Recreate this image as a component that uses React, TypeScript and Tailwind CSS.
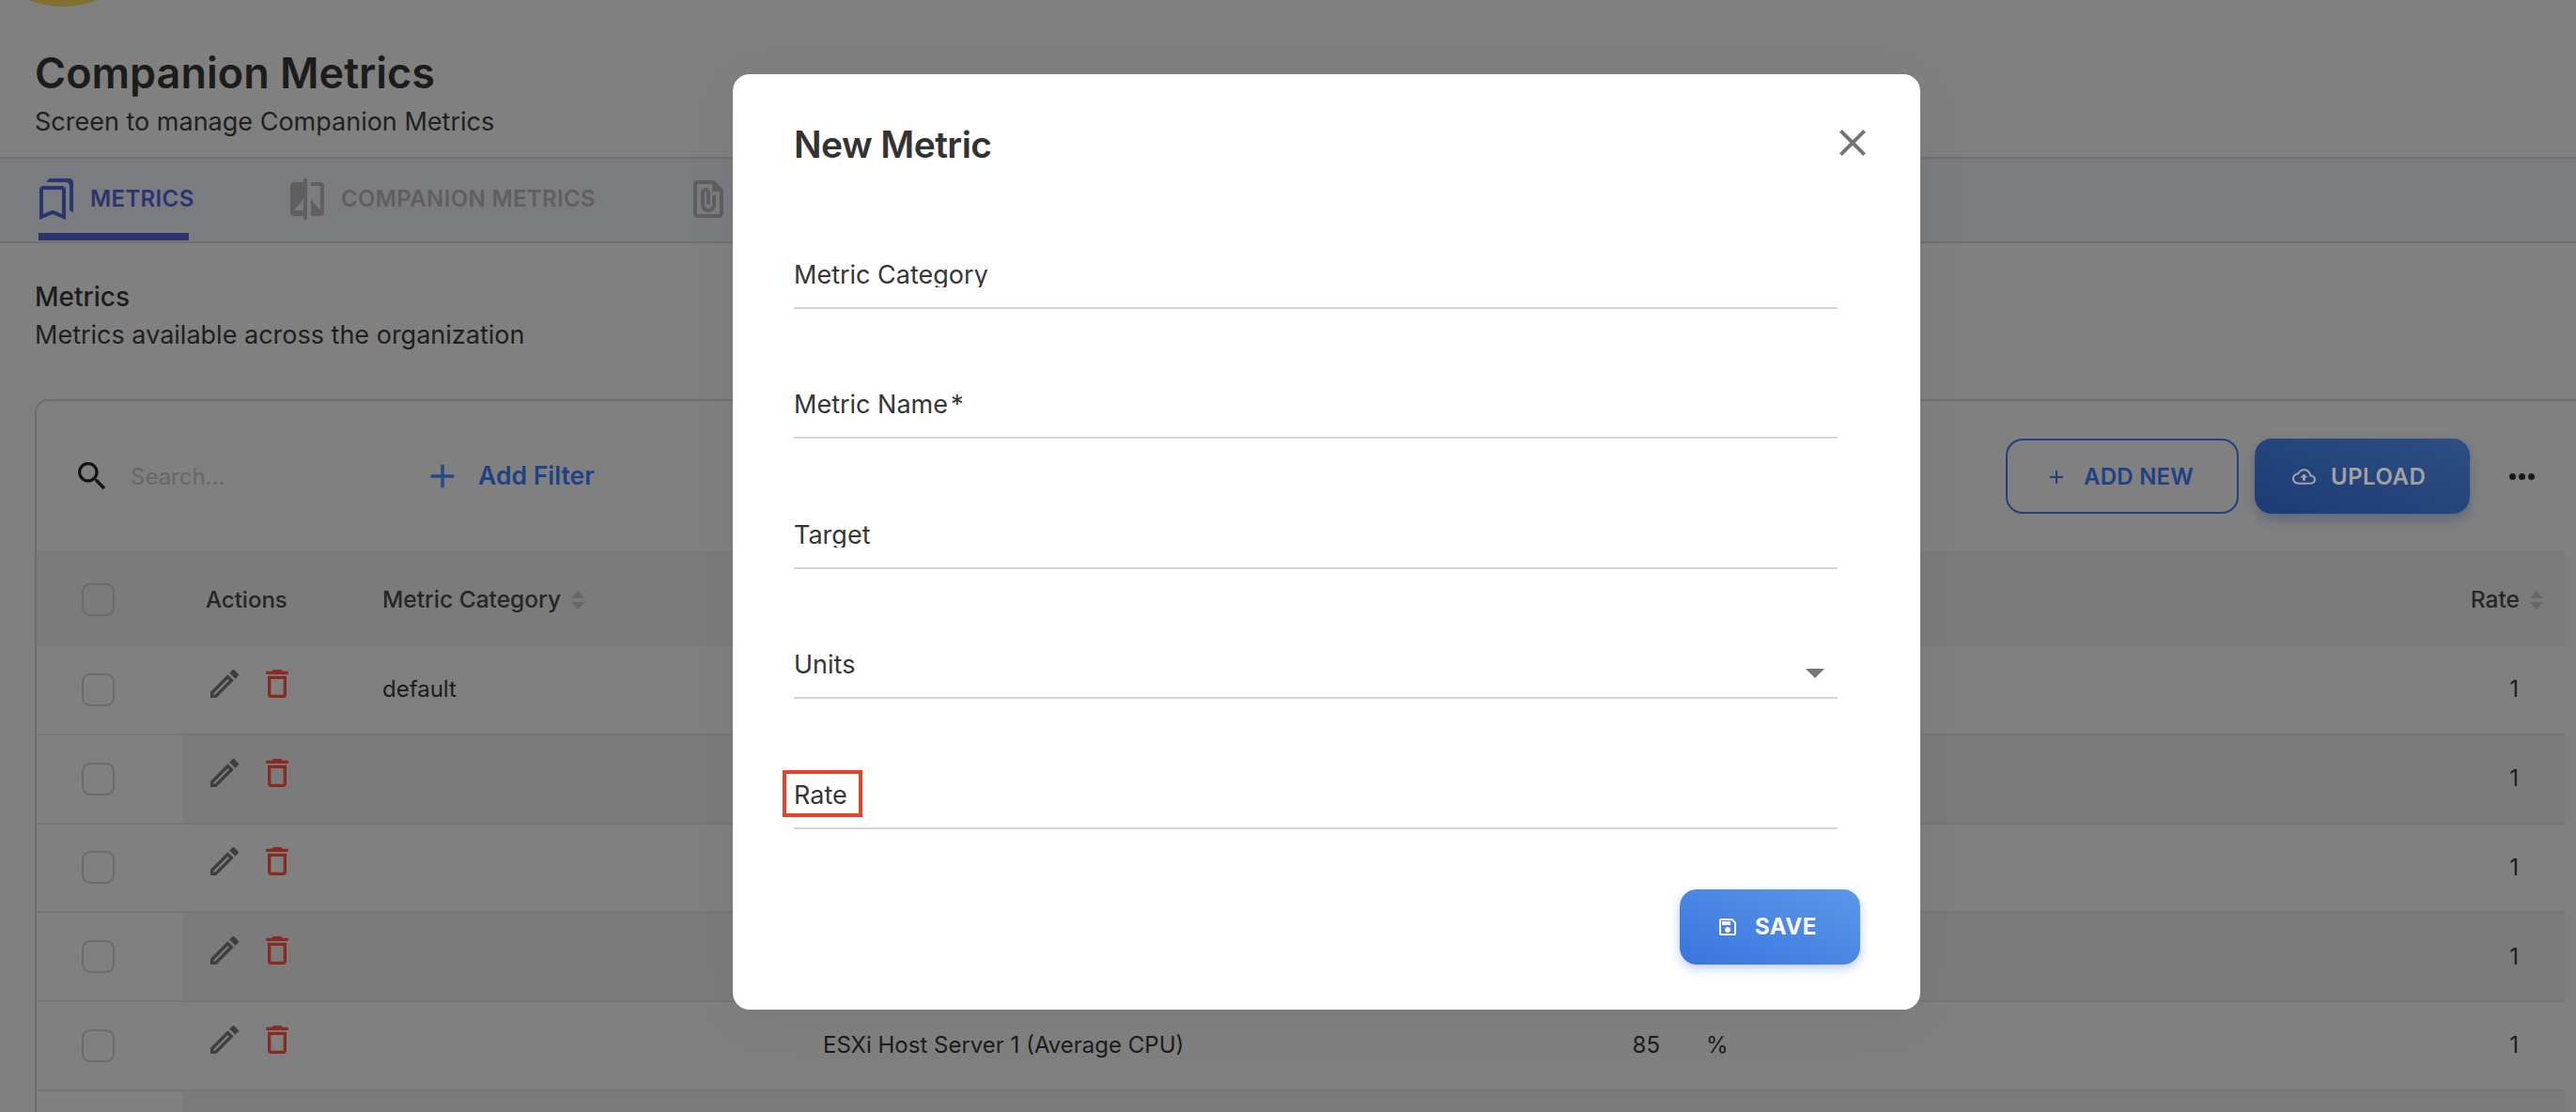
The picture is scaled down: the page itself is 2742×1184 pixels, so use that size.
import React from "react";

const P = {
  bookmarks: "M15 7v12.97l-4.21-1.81-.79-.34-.79.34L5 19.97V7h10m4-6H8.99C7.89 1 7 1.9 7 3h10c1.1 0 2 .9 2 2v13l2 1V3c0-1.1-.9-2-2-2zm-4 4H5c-1.1 0-2 .9-2 2v16l7-3 7 3V7c0-1.1-.9-2-2-2z",
  compare: "M10 3H5c-1.1 0-2 .9-2 2v14c0 1.1.9 2 2 2h5v2h2V1h-2v2zm0 15H5l5-6v6zm9-15h-5v2h5v13l-5-6v9h5c1.1 0 2-.9 2-2V5c0-1.1-.9-2-2-2z",
  file: "M15 2H6c-1.1 0-2 .9-2 2v16c0 1.1.9 2 2 2h12c1.1 0 2-.9 2-2V7l-5-5zM6 20V4h8v4h4v12H6zm10-10v5c0 2.21-1.79 4-4 4s-4-1.79-4-4V8.5c0-1.47 1.26-2.64 2.76-2.49 1.3.13 2.24 1.32 2.24 2.63V15h-2V8.5c0-.28-.22-.5-.5-.5s-.5.22-.5.5V15c0 1.1.9 2 2 2s2-.9 2-2v-5h2z",
  edit: "M14.06 9.02l.92.92L5.92 19H5v-.92l9.06-9.06M17.66 3c-.25 0-.51.1-.7.29l-1.83 1.83 3.75 3.75 1.83-1.83c.39-.39.39-1.02 0-1.41l-2.34-2.34c-.2-.2-.45-.29-.71-.29zm-3.6 3.19L3 17.25V21h3.75L17.81 9.94l-3.75-3.75z",
  trash: "M6 19c0 1.1.9 2 2 2h8c1.1 0 2-.9 2-2V7H6v12zM8 9h8v10H8V9zm7.5-5l-1-1h-5l-1 1H5v2h14V4h-3.5z",
  save: "M17 3H5c-1.11 0-2 .9-2 2v14c0 1.1.89 2 2 2h14c1.1 0 2-.9 2-2V7l-4-4zm2 16H5V5h11.17L19 7.83V19zm-7-7c-1.66 0-3 1.34-3 3s1.34 3 3 3 3-1.34 3-3-1.34-3-3-3zM6 6h9v4H6z",
  cloud: "M19.35 10.04C18.67 6.59 15.64 4 12 4 9.11 4 6.6 5.64 5.35 8.04 2.34 8.36 0 10.91 0 14c0 3.31 2.69 6 6 6h13c2.76 0 5-2.24 5-5 0-2.64-2.05-4.78-4.65-4.96zM19 18H6c-2.21 0-4-1.79-4-4 0-2.05 1.53-3.76 3.56-3.97l1.07-.11.5-.95C8.08 7.14 9.94 6 12 6c2.62 0 4.88 1.86 5.39 4.43l.3 1.5 1.53.11c1.56.1 2.78 1.41 2.78 2.96 0 1.65-1.35 3-3 3zM8 13h2.55v3h2.9v-3H16l-4-4z",
  search: "M15.5 14h-.79l-.28-.27C15.41 12.59 16 11.11 16 9.5 16 5.91 13.09 3 9.5 3S3 5.91 3 9.5 5.91 16 9.5 16c1.61 0 3.09-.59 4.23-1.57l.27.28v.79l5 4.99L20.49 19l-4.99-5zm-6 0C7.01 14 5 11.99 5 9.5S7.01 5 9.5 5 14 7.01 14 9.5 11.99 14 9.5 14z",
  add: "M19 13h-6v6h-2v-6H5v-2h6V5h2v6h6v2z",
  close: "M19 6.41L17.59 5 12 10.59 6.41 5 5 6.41 10.59 12 5 17.59 6.41 19 12 13.41 17.59 19 19 17.59 13.41 12z",
};

function Icon({ d, className }: { d: string; className: string }) {
  return (
    <svg viewBox="0 0 24 24" fill="currentColor" className={className}>
      <path d={d} />
    </svg>
  );
}

function Sort() {
  return (
    <svg viewBox="0 0 14 20" className="ml-[11px] h-[20px] w-[14px] shrink-0 fill-[#66666e]">
      <path d="M7 0l7 8H0z M0 12h14l-7 8z" />
    </svg>
  );
}

function Checkbox() {
  return <div className="h-[35px] w-[35px] rounded-[9px] border-2 border-[#6b6b6b]" />;
}

function Row({ striped, category, name, target, unit, rate }: { striped: boolean; category?: string; name?: string; target?: string; unit?: string; rate?: string }) {
  return (
    <div className={`grid h-[94.75px] grid-cols-[156px_212px_469px_824px_67px_633px_330px] items-center border-b-2 border-[#767676] text-[24px] text-[#1c1c1c] ${striped ? "bg-[#7b7b7b]" : "bg-[#808080]"}`}>
      <div className="flex h-full items-center bg-[#808080] pl-[48px]">
        <Checkbox />
      </div>
      <div className="mb-[13px] flex items-center pl-[24px]">
        <Icon d={P.edit} className="h-[40px] w-[40px] text-[#3e3e3e]" />
        <Icon d={P.trash} className="ml-[16px] h-[40px] w-[40px] text-[#872a22]" />
      </div>
      <div>{category}</div>
      <div className="whitespace-nowrap">{name}</div>
      <div className="text-right">{target}</div>
      <div className="pl-[49px]">{unit}</div>
      <div className="pr-[49px] text-right">{rate}</div>
    </div>
  );
}

function Field({ label, required, select, mark }: { label: string; required?: boolean; select?: boolean; mark?: boolean }) {
  return (
    <div className="relative flex h-[138.5px] items-end justify-between border-b-2 border-[#d1d5db]">
      <div className="mb-[21px] h-[29px] overflow-hidden text-[27px] leading-[32px] text-[#363636]">
        {label}
        {required && <span className="ml-[3px]">*</span>}
      </div>
      {select && (
        <svg viewBox="0 0 20 10" className="mr-[14px] mb-[20px] h-[10px] w-[20px] fill-[#757575]">
          <path d="M0 0h20L10 10z" />
        </svg>
      )}
      {mark && <div className="absolute bottom-[11px] -left-[12px] h-[50px] w-[85px] border-4 border-[#e8412a]" />}
    </div>
  );
}

export default function App() {
  return (
    <div className="relative h-[1184px] w-[2742px] overflow-hidden bg-[#808080] [font-family:Inter,sans-serif]">
      <div className="-mt-[193px] -ml-[33px] h-[200px] w-[200px] rounded-full bg-[#83702e]" />

      <header className="px-[37px] pt-[43px] pb-[19px]">
        <h1 className="text-[45px] leading-[56px] font-semibold text-[#1c1c1c]">Companion Metrics</h1>
        <p className="mt-[6px] text-[27px] leading-[36px] text-[#1f1f1f]">Screen to manage Companion Metrics</p>
      </header>

      <nav className="flex h-[92px] border-y-2 border-[#707173] bg-[#7a7c80] pl-[41px] text-[24px] leading-none font-semibold tracking-[0.015em]">
        <div className="flex h-[87px] w-[160px] items-center border-b-[8px] border-[#2a3570] pt-[7px] text-[#2a3570]">
          <Icon d={P.bookmarks} className="-ml-[5px] h-[48px] w-[48px] shrink-0" />
          <span className="ml-[12px]">METRICS</span>
        </div>
        <div className="ml-[102px] flex h-[79px] items-center pt-[7px] text-[#5f5f5f]">
          <Icon d={P.compare} className="h-[48px] w-[48px] shrink-0" />
          <span className="ml-[12px]">COMPANION METRICS</span>
        </div>
        <div className="ml-[96px] flex h-[79px] items-center pt-[7px] text-[#5f5f5f]">
          <Icon d={P.file} className="h-[48px] w-[48px] shrink-0" />
        </div>
      </nav>

      <section className="px-[37px] pt-[39px]">
        <h2 className="text-[28px] leading-[36px] font-medium text-[#1c1c1c]">Metrics</h2>
        <p className="mt-[5px] text-[27px] leading-[36px] text-[#1f1f1f]">Metrics available across the organization</p>
      </section>

      <section className="mt-[50px] ml-[37px] w-[2760px] rounded-tl-[14px] border-2 border-[#6e6e6e]">
        <div className="flex h-[160px] w-[2691px] items-center pr-[32px] pl-[39px]">
          <Icon d={P.search} className="h-[40px] w-[40px] shrink-0 text-[#141414]" />
          <span className="ml-[21px] w-[311px] pt-[2px] text-[24px] text-[#676767]">Search...</span>
          <Icon d={P.add} className="h-[42px] w-[42px] shrink-0 text-[#244a8a]" />
          <span className="ml-[17px] text-[26.5px] font-semibold text-[#1f4184]">Add Filter</span>
          <div className="ml-auto flex h-[80px] w-[248px] items-center gap-[17px] rounded-[18px] border-2 border-[#1f4184] pt-[1px] pl-[40px] text-[24px] font-semibold tracking-[0.01em] text-[#1f4184]">
            <Icon d={P.add} className="h-[24px] w-[24px] shrink-0" />
            ADD NEW
          </div>
          <div className="ml-[17px] flex h-[80px] w-[229px] items-center gap-[16px] rounded-[18px] bg-linear-to-tr from-[#1d3a76] to-[#2e4f80] pt-[1px] pl-[40px] text-[24px] font-semibold tracking-[0.02em] text-[#a0a2a6] shadow-[0_6px_12px_rgba(30,60,120,0.35)]">
            <Icon d={P.cloud} className="h-[25px] w-[25px] shrink-0" />
            UPLOAD
          </div>
          <div className="ml-[42px] flex w-[27px] justify-between">
            <span className="h-[7px] w-[7px] rounded-full bg-[#1a1a1a]" />
            <span className="h-[7px] w-[7px] rounded-full bg-[#1a1a1a]" />
            <span className="h-[7px] w-[7px] rounded-full bg-[#1a1a1a]" />
          </div>
        </div>

        <div className="w-[2691px]">
          <div className="grid h-[101px] grid-cols-[156px_212px_1fr_auto] items-center bg-[#7b7b7b] pt-[2px] text-[24.5px] font-medium text-[#262626]">
            <div className="pl-[48px]"><Checkbox /></div>
            <div className="pl-[24px] text-[24px]">Actions</div>
            <div className="flex items-center">Metric Category<Sort /></div>
            <div className="flex items-center pr-[23px]">Rate<Sort /></div>
          </div>
          <Row striped={false} category="default" rate="1" />
          <Row striped rate="1" />
          <Row striped={false} rate="1" />
          <Row striped rate="1" />
          <Row striped={false} name="ESXi Host Server 1 (Average CPU)" target="85" unit="%" rate="1" />
          <Row striped />
        </div>
      </section>

      <div className="absolute top-[79px] left-[780px] h-[996px] w-[1264px] rounded-[18px] bg-white pt-[38px] pr-[64px] pl-[65px] shadow-[0_10px_60px_rgba(0,0,0,0.05)]">
        <div className="flex h-[73px] items-center justify-between">
          <h3 className="text-[39px] leading-[48px] font-semibold tracking-[-0.015em] text-[#333333]">New Metric</h3>
          <Icon d={P.close} className="-mt-[4px] -mr-[16px] h-[48px] w-[48px] text-[#757575]" />
        </div>
        <div className="w-[1111px]">
          <Field label="Metric Category" />
          <Field label="Metric Name" required />
          <Field label="Target" />
          <Field label="Units" select />
          <Field label="Rate" mark />
        </div>
        <div className="mt-[64px] flex justify-end">
          <div className="flex h-[80px] w-[192px] items-center gap-[17px] rounded-[18px] bg-linear-to-tr from-[#3a74df] to-[#5b98e8] pl-[39px] text-[24px] font-bold tracking-[0.02em] text-white shadow-[0_4px_12px_rgba(60,110,230,0.35)]">
            <Icon d={P.save} className="h-[24px] w-[24px] shrink-0" />
            SAVE
          </div>
        </div>
      </div>
    </div>
  );
}
